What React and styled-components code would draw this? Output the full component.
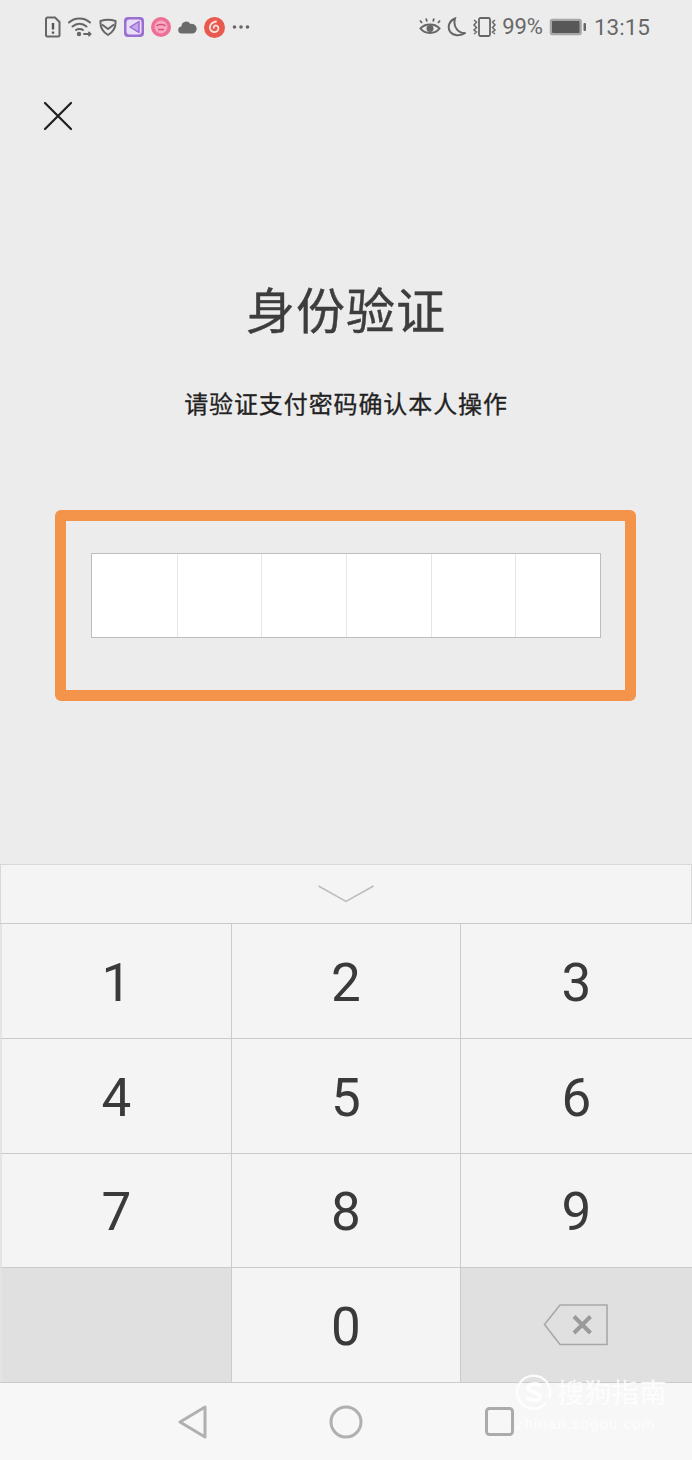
import React from 'react'
import styled, { createGlobalStyle } from 'styled-components'

const GlobalStyle = createGlobalStyle`
  html, body {
    margin: 0;
    padding: 0;
    background: #ececec;
  }
`

const Screen = styled.div`
  position: relative;
  width: 692px;
  height: 1460px;
  overflow: hidden;
  display: flex;
  flex-direction: column;
  background: #ececec;
  font-family: Roboto, 'Noto Sans CJK SC', sans-serif;
`
const StatusBar = styled.div`
  height: 55px;
  flex: none;
  box-sizing: border-box;
  padding: 0 42px 1px 45px;
  display: flex;
  align-items: center;
  justify-content: space-between;
  color: #666;
`
const StatusGroup = styled.div`
  display: flex;
  align-items: center;
  gap: ${props => props.gap}px;
`
const StatusText = styled.span`
  font-size: ${props => props.size}px;
  line-height: 28px;
  color: #686868;
  margin-left: ${props => props.lead || 0}px;
`
const Main = styled.div`
  flex: 1;
  display: flex;
  flex-direction: column;
  align-items: center;
`
const CloseRow = styled.div`
  align-self: stretch;
  height: 223px;
  box-sizing: border-box;
  padding: 46px 0 0 43px;
`
const Title = styled.h1`
  margin: 0;
  font-family: 'Noto Sans CJK SC', sans-serif;
  font-size: 49px;
  font-weight: 400;
  line-height: 60px;
  letter-spacing: 1px;
  color: #3d3d3d;
  -webkit-text-stroke: 0.4px #3d3d3d;
`
const Subtitle = styled.p`
  margin: 45px 0 0;
  font-family: 'Noto Sans CJK SC', sans-serif;
  font-size: 24px;
  line-height: 40px;
  letter-spacing: 0.9px;
  color: #222;
  -webkit-text-stroke: 0.3px #222;
`
const Highlight = styled.div`
  margin: 87px 1px 0 0;
  width: 581px;
  height: 191px;
  box-sizing: border-box;
  border: 11px solid #f4934a;
  border-radius: 6px;
  display: flex;
  align-items: center;
  justify-content: center;
  padding: 0 0 21px 1px;
`
const PinBox = styled.div`
  width: 510px;
  height: 85px;
  box-sizing: border-box;
  display: grid;
  grid-template-columns: repeat(6, 1fr);
  background: #fff;
  border: 1px solid #bdbdbd;
`
const PinCell = styled.div`
  border-left: ${props => (props.first ? 'none' : '1px solid #e6e6e6')};
`
const Keyboard = styled.div`
  flex: none;
  display: flex;
  flex-direction: column;
`
const CollapseBar = styled.div`
  height: 59px;
  box-sizing: border-box;
  display: flex;
  align-items: center;
  justify-content: center;
  background: #f4f4f4;
  border: 1px solid #d8d8d8;
  border-bottom: none;
`
const KeyGrid = styled.div`
  display: grid;
  grid-template-columns: 232px 229px 231px;
  grid-auto-rows: 114.75px;
  border-top: 1px solid #cbcbcb;
  margin-bottom: -1px;
`
const Key = styled.div`
  box-sizing: border-box;
  display: flex;
  align-items: center;
  justify-content: center;
  padding-top: 4px;
  font-size: 53px;
  font-weight: 400;
  color: #3a3a3a;
  background: ${props => (props.dark ? '#e0e0e0' : '#f4f4f4')};
  border-bottom: 1px solid #cbcbcb;
  border-right: ${props => (props.last ? 'none' : '1px solid #cbcbcb')};
  border-left: ${props => (props.edge ? '2px solid #e4e4e4' : 'none')};
`
const NavBar = styled.div`
  flex: none;
  height: 78px;
  background: #f7f7f7;
  border-top: 1px solid #cbcbcb;
  display: grid;
  grid-template-columns: repeat(3, 153px);
  justify-content: center;
  align-items: center;
  justify-items: center;
  box-sizing: border-box;
`
const Watermark = styled.div`
  position: absolute;
  left: 516px;
  top: 1373px;
  width: 156px;
  color: rgba(255, 255, 255, 0.82);
`
const WatermarkName = styled.div`
  display: flex;
  align-items: center;
  gap: 5px;
  height: 38px;
  font-family: 'Noto Sans CJK SC', sans-serif;
  font-size: 27px;
  line-height: 38px;
  letter-spacing: 0.5px;
`
const WatermarkUrl = styled.div`
  margin-top: 4px;
  font-family: 'Liberation Sans', sans-serif;
  font-size: 15px;
  line-height: 18px;
  letter-spacing: 1.1px;
  white-space: nowrap;
`

const DocIcon = () => (
  <svg width="16" height="22" viewBox="0 0 16 22" fill="none">
    <path d="M2.5 1.5H10L14.5 6V19a1.5 1.5 0 0 1-1.5 1.5H2.5A1.5 1.5 0 0 1 1 19V3a1.5 1.5 0 0 1 1.5-1.5Z" stroke="#666" strokeWidth="2" />
    <path d="M8 7v6.5M8 15.5v2.2" stroke="#555" strokeWidth="2.4" />
  </svg>
)
const WifiIcon = () => (
  <svg width="24" height="22" viewBox="0 0 24 22" fill="none" stroke="#666" strokeWidth="2" strokeLinecap="round">
    <path d="M1 6.5C6.5 1 16.5 1 22 6.5" />
    <path d="M4.5 10.5C8.5 6.8 14.500 6.8 18.5 10.5" />
    <path d="M8 14C9.5 12.8 13.5 12.8 15 14" />
    <circle cx="11" cy="18" r="2.2" fill="#666" stroke="none" />
    <path d="M16 18h4M21 16.500l1.500 1.500-1.500 1.500" strokeWidth="1.8" />
  </svg>
)
const ShieldIcon = () => (
  <svg width="18" height="20" viewBox="0 0 18 20" fill="none" stroke="#666" strokeWidth="2" strokeLinejoin="round">
    <path d="M1.5 4C6 2.5 12 2.5 16.5 4C17 10 14 15 9 18C4 15 1 10 1.5 4Z" />
    <path d="M3 7.5L9 12l6-4.5" />
  </svg>
)
const PurpleApp = () => (
  <svg width="20" height="20" viewBox="0 0 20 20">
    <rect width="20" height="20" rx="4" fill="#9a6fd2" />
    <rect x="2.5" y="2.5" width="15" height="15" rx="3" fill="#e9def8" />
    <path d="M15 4.5L6 10l9 5.5V4.500Z" fill="#c4a6ea" stroke="#9a66d6" strokeWidth="1.4" strokeLinejoin="round" />
  </svg>
)
const PinkApp = () => (
  <svg width="20" height="20" viewBox="0 0 20 20">
    <circle cx="10" cy="10" r="10" fill="#ee6f96" />
    <circle cx="10" cy="10" r="6.5" fill="#f6a9c0" />
    <path d="M5.5 9c1.500-2 7.500-2 9 0M7 12.500h6" fill="none" stroke="#d9507e" strokeWidth="1.6" />
  </svg>
)
const CloudIcon = () => (
  <svg width="19" height="14" viewBox="0 0 19 14">
    <path d="M4 13.500a3.500 3.500 0 0 1-.5-7A4.800 4.800 0 0 1 12.500 4 4.500 4.500 0 0 1 15 13.500Z" fill="#6b6b6b" />
  </svg>
)
const RedApp = () => (
  <svg width="21" height="21" viewBox="0 0 21 21">
    <circle cx="10.5" cy="10.5" r="10.5" fill="#e8594f" />
    <path d="M12 4.500C8 5 5.500 8 6 11.500c.5 3 4 4.500 6.500 3S15 10 13 8.800c-1.500-.8-3.500.2-3.300 2" fill="none" stroke="#fbe3df" strokeWidth="1.8" strokeLinecap="round" />
  </svg>
)
const DotsIcon = () => (
  <svg width="18" height="6" viewBox="0 0 18 6" fill="#666">
    <circle cx="2.5" cy="3" r="1.8" />
    <circle cx="9" cy="3" r="1.8" />
    <circle cx="15.5" cy="3" r="1.8" />
  </svg>
)
const EyeIcon = () => (
  <svg width="22" height="20" viewBox="0 0 22 20" fill="none" stroke="#666" strokeWidth="2">
    <path d="M1.5 11.500C6 6 16 6 20.500 11.500C16 17.500 6 17.500 1.500 11.500Z" />
    <circle cx="11" cy="11.5" r="3.5" fill="#666" stroke="none" />
    <path d="M3 6L1 3.500M8 4.500L7 1.500M14 4.500L15 1.500M19 6l2-2.500" strokeWidth="1.8" />
  </svg>
)
const MoonIcon = () => (
  <svg width="20" height="20" viewBox="0 0 20 20" fill="none" stroke="#666" strokeWidth="2">
    <path d="M8 1.500C2.500 3.500 0 9.500 3 14.500c3 4.500 10 5 15.500 1.500C12 16.500 5.500 10.500 8 1.500Z" />
  </svg>
)
const VibrateIcon = () => (
  <svg width="23" height="20" viewBox="0 0 23 20" fill="none" stroke="#666" strokeWidth="1.8">
    <rect x="6" y="1" width="11" height="18" rx="1.5" />
    <path d="M1 3l2.500 2L1 8l2.500 2.500L1 13l2.500 2L1 17M22 3l-2.500 2L22 8l-2.500 2.500L22 13l-2.500 2L22 17" strokeWidth="1.5" />
  </svg>
)
const BatteryIcon = () => (
  <svg width="37" height="18" viewBox="0 0 37 18">
    <rect x="0.8" y="0.8" width="32" height="16.4" rx="2.5" fill="#a6a6a6" />
    <rect x="3" y="3" width="27.5" height="12" rx="1" fill="#585858" />
    <rect x="34.5" y="5" width="2.5" height="8" rx="1" fill="#666" />
  </svg>
)

const CloseIcon = () => (
  <svg width="30" height="30" viewBox="0 0 30 30" stroke="#1f1f1f" strokeWidth="2.2" strokeLinecap="round" style={{ display: 'block' }}>
    <path d="M2 2l26 26M28 2L2 28" />
  </svg>
)
const ChevronIcon = () => (
  <svg width="56" height="18" viewBox="0 0 56 18" fill="none" stroke="#bcbcbc" strokeWidth="1.5">
    <path d="M0.5 1L28 16.500 55.500 1" />
  </svg>
)
const BackspaceIcon = () => (
  <svg width="66" height="42" viewBox="0 0 66 42" fill="none" style={{ marginTop: -4, marginLeft: -2 }}>
    <path d="M17 1H64V40.500H17L1.500 20.500Z" stroke="#a8a8a8" strokeWidth="1.6" />
    <path d="M31 12.500l16.500 16.500M47.500 12.500L31 29" stroke="#9a9a9a" strokeWidth="4" />
  </svg>
)
const BackIcon = () => (
  <svg width="30" height="34" viewBox="0 0 30 34" fill="none" stroke="#b0b0b0" strokeWidth="3" strokeLinejoin="round">
    <path d="M27 2V32L2 17Z" />
  </svg>
)
const HomeIcon = () => (
  <svg width="34" height="34" viewBox="0 0 34 34" fill="none" stroke="#b0b0b0" strokeWidth="3">
    <circle cx="17" cy="17" r="15" />
  </svg>
)
const RecentIcon = () => (
  <svg width="29" height="29" viewBox="0 0 29 29" fill="none" stroke="#ababab" strokeWidth="3">
    <rect x="1.5" y="1.5" width="26" height="26" rx="3" />
  </svg>
)
const SogouLogo = () => (
  <svg width="36" height="36" viewBox="0 0 36 36" fill="none" stroke="currentColor">
    <path d="M30 29A16.500 16.500 0 1 1 33 24" strokeWidth="2.5" />
    <path d="M25 12c-3-3-12-3-13 1.500s12 4.500 12 9-10 5-13.500 1" strokeWidth="4" />
  </svg>
)

const keys = ['1', '2', '3', '4', '5', '6', '7', '8', '9']

const App = () => (
  <Screen>
    <GlobalStyle />
    <StatusBar>
      <StatusGroup gap={7}>
        <DocIcon />
        <WifiIcon />
        <ShieldIcon />
        <PurpleApp />
        <PinkApp />
        <CloudIcon />
        <RedApp />
        <DotsIcon />
      </StatusGroup>
      <StatusGroup gap={6}>
        <EyeIcon />
        <MoonIcon />
        <VibrateIcon />
        <StatusText size={22}>99%</StatusText>
        <BatteryIcon />
        <StatusText size={22.5} lead={2}>13:15</StatusText>
      </StatusGroup>
    </StatusBar>

    <Main>
      <CloseRow>
        <CloseIcon />
      </CloseRow>
      <Title>身份验证</Title>
      <Subtitle>请验证支付密码确认本人操作</Subtitle>
      <Highlight>
        <PinBox>
          {[0, 1, 2, 3, 4, 5].map(i => (
            <PinCell key={i} first={i === 0} />
          ))}
        </PinBox>
      </Highlight>
    </Main>

    <Keyboard>
      <CollapseBar>
        <ChevronIcon />
      </CollapseBar>
      <KeyGrid>
        {keys.map((k, i) => (
          <Key key={k} edge={i % 3 === 0} last={i % 3 === 2}>
            {k}
          </Key>
        ))}
        <Key dark edge />
        <Key>0</Key>
        <Key dark last>
          <BackspaceIcon />
        </Key>
      </KeyGrid>
    </Keyboard>

    <NavBar>
      <BackIcon />
      <HomeIcon />
      <RecentIcon />
    </NavBar>

    <Watermark>
      <WatermarkName>
        <SogouLogo />
        <span>搜狗指南</span>
      </WatermarkName>
      <WatermarkUrl>zhinan.sogou.com</WatermarkUrl>
    </Watermark>
  </Screen>
)

export default App
